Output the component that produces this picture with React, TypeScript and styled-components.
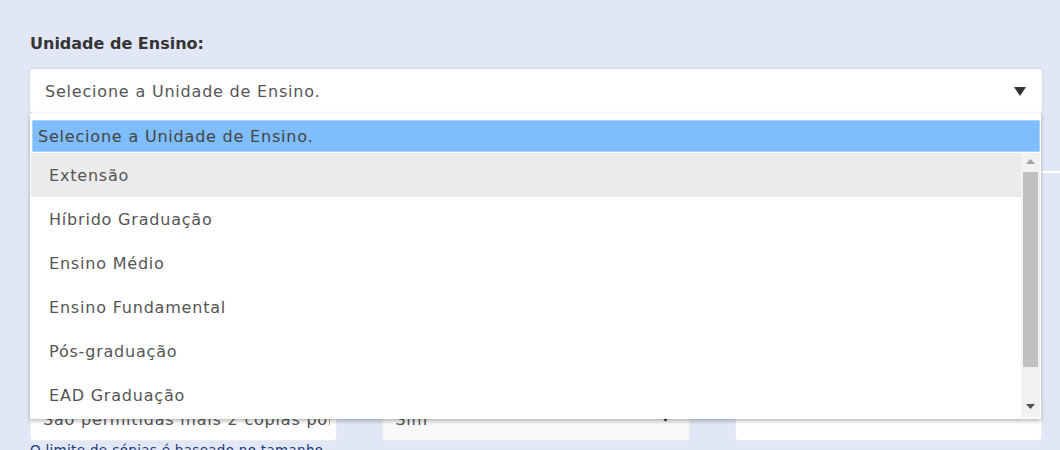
import React from "react";
import styled, { createGlobalStyle } from "styled-components";

const Global = createGlobalStyle`
  html, body { margin: 0; padding: 0; }
  body {
    background: #e1e7f4;
    font-family: "DejaVu Sans", "Liberation Sans", sans-serif;
    overflow: hidden;
    width: 1060px;
    height: 450px;
  }
`;

const Page = styled.div`
  padding: 34px 18px 0 30px;
  display: flex;
  flex-direction: column;
`;

const Label = styled.label`
  display: block;
  font-size: 16px;
  line-height: 20px;
  font-weight: bold;
  color: #343434;
  margin-bottom: 15px;
`;

const SelectWrap = styled.div`
  position: relative;
  z-index: 5;
`;

const SelectBox = styled.div`
  height: 44px;
  background: #fff;
  border-radius: 4px;
  box-shadow: 0 0 3px rgba(60, 70, 100, 0.18);
  display: flex;
  align-items: center;
  justify-content: space-between;
  padding: 0 16px 0 15px;
  font-size: 16px;
  letter-spacing: 0.8px;
  color: #555;
`;

const Caret = styled.svg<{ $w: number; $h: number; $c: string }>`
  width: ${(p) => p.$w}px;
  height: ${(p) => p.$h}px;
  fill: ${(p) => p.$c};
  flex: none;
`;

const Dropdown = styled.div`
  position: absolute;
  top: 100%;
  left: 0;
  right: 1px;
  background: #fff;
  padding: 7px 1px 2px 2px;
  box-shadow: 0 2px 4px rgba(0, 0, 0, 0.28);
  display: flex;
  flex-direction: column;
  gap: 1px;
`;

const Highlight = styled.div`
  height: 30px;
  background: #7fbdff;
  border: 1px solid #a9d2ff;
  display: flex;
  align-items: center;
  padding-left: 5px;
  font-size: 16px;
  letter-spacing: 0.8px;
  color: #444;
`;

const ListArea = styled.div`
  display: flex;
  margin-left: -1px;
`;

const Options = styled.div`
  flex: 1;
  display: flex;
  flex-direction: column;
`;

const Option = styled.div<{ $hover?: boolean }>`
  height: 44px;
  display: flex;
  align-items: center;
  padding-left: 18px;
  font-size: 16px;
  letter-spacing: 0.8px;
  color: #555;
  background: ${(p) => (p.$hover ? "#ebebeb" : "#fff")};
`;

const Scrollbar = styled.div`
  width: 19px;
  background: #f1f1f1;
  display: flex;
  flex-direction: column;
  align-items: center;
  padding: 6px 0 8px;
  box-sizing: border-box;
`;

const Thumb = styled.div`
  width: 15px;
  flex: 1;
  margin: 8px 0 37px;
  background: #c1c1c1;
`;

const Divider = styled.div`
  height: 2px;
  background: #fff;
  margin: 58px -40px 0 0;
`;

const FieldRow = styled.div`
  display: grid;
  grid-template-columns: repeat(3, minmax(0, 1fr));
  column-gap: 45px;
  margin-top: 225px;
`;

const Field = styled.div<{ $muted?: boolean; $padR?: number }>`
  height: 43px;
  background: ${(p) => (p.$muted ? "#f8f8f8" : "#fff")};
  border: 1px solid #e9ecf2;
  border-radius: 4px;
  box-sizing: border-box;
  display: flex;
  align-items: center;
  justify-content: space-between;
  padding: 0 ${(p) => p.$padR ?? 20}px 0 12px;
  font-size: 16px;
  letter-spacing: 0.8px;
  color: #555;
  overflow: hidden;
  white-space: nowrap;
`;

const FieldText = styled.span`
  overflow: hidden;
  white-space: nowrap;
`;

const Help = styled.div`
  margin-top: 1px;
  font-size: 13.5px;
  line-height: 16px;
  color: #1e3b7a;
  letter-spacing: 0.3px;
`;

const options = [
  "Extensão",
  "Híbrido Graduação",
  "Ensino Médio",
  "Ensino Fundamental",
  "Pós-graduação",
  "EAD Graduação",
];

export default function App() {
  return (
    <>
      <Global />
      <Page>
        <Label>Unidade de Ensino:</Label>
        <SelectWrap>
          <SelectBox>
            <span>Selecione a Unidade de Ensino.</span>
            <Caret $w={12} $h={9} $c="#333" viewBox="0 0 12 9">
              <path d="M0 0 H12 L6 9 Z" />
            </Caret>
          </SelectBox>
          <Dropdown>
            <Highlight>Selecione a Unidade de Ensino.</Highlight>
            <ListArea>
              <Options>
                {options.map((o, i) => (
                  <Option key={o} $hover={i === 0}>
                    {o}
                  </Option>
                ))}
              </Options>
              <Scrollbar>
                <Caret $w={9} $h={5} $c="#a3a3a3" viewBox="0 0 9 5">
                  <path d="M0 5 H9 L4.5 0 Z" />
                </Caret>
                <Thumb />
                <Caret $w={9} $h={5} $c="#505050" viewBox="0 0 9 5">
                  <path d="M0 0 H9 L4.5 5 Z" />
                </Caret>
              </Scrollbar>
            </ListArea>
          </Dropdown>
        </SelectWrap>
        <Divider />
        <FieldRow>
          <div>
            <Field $padR={6}>
              <FieldText>São permitidas mais 2 cópias por aluno</FieldText>
            </Field>
            <Help>O limite de cópias é baseado no tamanho da turma</Help>
          </div>
          <div>
            <Field $muted>
              <FieldText>Sim</FieldText>
              <Caret $w={7} $h={5} $c="#333" viewBox="0 0 7 5">
                <path d="M0 0 H7 L3.5 5 Z" />
              </Caret>
            </Field>
          </div>
          <div>
            <Field />
          </div>
        </FieldRow>
      </Page>
    </>
  );
}
